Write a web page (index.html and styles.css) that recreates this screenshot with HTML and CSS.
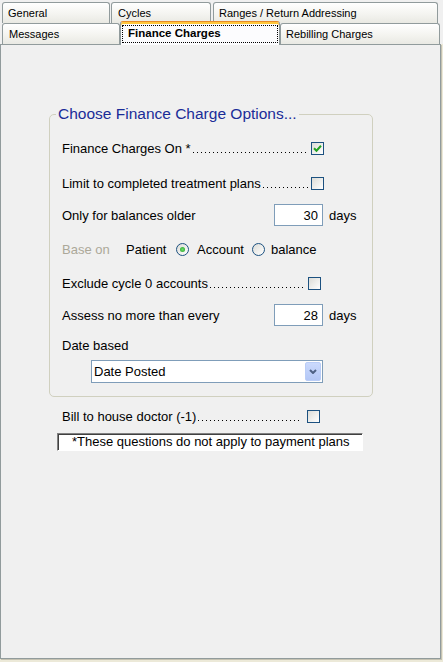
FILE: index.html
```html
<!DOCTYPE html>
<html lang="en">
<head>
  <meta charset="UTF-8">
  <title>Finance Charges</title>
  <link rel="stylesheet" href="styles.css">
</head>
<body>
  <div class="window">
    <div class="tabs">
      <div class="tab-row">
        <div class="tab tab-general">General</div>
        <div class="tab tab-cycles">Cycles</div>
        <div class="tab tab-ranges">Ranges / Return Addressing</div>
      </div>
      <div class="tab-row">
        <div class="tab tab-messages">Messages</div>
        <div class="tab active"><span class="focus">Finance Charges</span></div>
        <div class="tab tab-rebill">Rebilling Charges</div>
      </div>
    </div>

    <div class="panel">
      <fieldset class="group">
        <legend>Choose Finance Charge Options...</legend>
        <div class="rows">
          <div class="row">
            <span class="leader lead-on"><span>Finance Charges On *</span><span class="dots"></span></span>
            <span class="check gap-5">
              <svg width="9" height="9" viewBox="0 0 9 9"><polyline points="1,4.2 3.5,6.7 8,1.8" fill="none" stroke="#21a121" stroke-width="2"/></svg>
            </span>
          </div>
          <div class="row">
            <span class="leader lead-limit"><span>Limit to completed treatment plans</span><span class="dots"></span></span>
            <span class="check"></span>
          </div>
          <div class="row">
            <span class="field-label">Only for balances older</span>
            <input class="num" type="text" value="30">
            <span class="unit">days</span>
          </div>
          <div class="row">
            <span class="muted">Base on</span>
            <span class="patient">Patient</span>
            <span class="radio on"></span>
            <span class="opt">Account</span>
            <span class="radio"></span>
            <span class="opt-last">balance</span>
          </div>
          <div class="row">
            <span class="leader lead-cycle"><span>Exclude cycle 0 accounts</span><span class="dots"></span></span>
            <span class="check gap-4"></span>
          </div>
          <div class="row">
            <span class="field-label">Assess no more than every</span>
            <input class="num" type="text" value="28">
            <span class="unit">days</span>
          </div>
          <div class="row">
            <span>Date based</span>
          </div>
          <div class="row">
            <div class="select">
              <span class="select-text">Date Posted</span>
              <span class="drop">
                <svg width="8" height="5" viewBox="0 0 8 5"><polyline points="1,1 4,4 7,1" fill="none" stroke="#4d6185" stroke-width="2"/></svg>
              </span>
            </div>
          </div>
        </div>
      </fieldset>

      <div class="row bill">
        <span class="leader lead-bill"><span>Bill to house doctor (-1)</span><span class="dots"></span></span>
        <span class="check gap-8"></span>
      </div>

      <div class="note">*These questions do not apply to payment plans</div>
    </div>
  </div>
</body>
</html>
```

FILE: styles.css
```css
* {
  box-sizing: border-box;
  margin: 0;
  padding: 0;
}

body {
  font-family: "Liberation Sans", Arial, sans-serif;
  font-size: 13px;
  color: #000;
  background: #ece9d8;
}

.window {
  width: 443px;
  height: 662px;
}

/* tabs */

.tabs {
  height: 44px;
  padding-top: 2px;
  background: #f0f0f0;
}

.tab-row {
  display: flex;
  height: 21px;
}

.tab {
  flex: none;
  height: 21px;
  border: 1px solid #919b9c;
  border-bottom: none;
  border-radius: 3px 3px 0 0;
  background: linear-gradient(#ffffff, #f4f4f0 55%, #e9e9e3);
  font-size: 11px;
  line-height: 20px;
  padding-left: 5px;
  white-space: nowrap;
}

.tab-general {
  width: 108px;
  margin-left: 2px;
}

.tab-cycles {
  width: 100px;
  margin-left: 1px;
  padding-left: 6px;
}

.tab-ranges {
  width: 225px;
  margin-left: 2px;
}

.tab-messages {
  width: 118px;
  margin-left: 2px;
  padding-left: 6px;
}

.tab-rebill {
  width: 160px;
}

.tab.active {
  position: relative;
  z-index: 1;
  width: 160px;
  height: 24px;
  margin-top: -2px;
  padding: 3px 1px 0;
  background: #fcfcfe;
  border-top: 1px solid #e68b2c;
  border-radius: 3px 3px 0 0;
  box-shadow: inset 0 2px #ffc73c;
  font-size: 11.5px;
  font-weight: bold;
}

.focus {
  display: block;
  height: 18px;
  border: 1px dotted #000;
  padding-left: 5px;
  line-height: 14px;
}

/* panel */

.panel {
  width: 441px;
  height: 615px;
  border: 1px solid #919b9c;
  background: #f0f0f0;
  box-shadow: 1px 1px 0 #c5c2b2;
  padding: 60px 0 0 48px;
}

.group {
  width: 324px;
  border: 1px solid #d0d0bf;
  border-radius: 5px;
  padding: 8px 0 12px 12px;
}

.group legend {
  margin-left: -6px;
  padding: 0 2px;
  font-size: 15.5px;
  line-height: 18px;
  color: #1a2c98;
}

.rows {
  display: grid;
  grid-template-rows: 34px 36px 28px 40px 29px 34px 26px 26px;
}

.row {
  display: flex;
  align-items: center;
  white-space: nowrap;
}

/* label followed by a dotted leader up to the checkbox */
.leader {
  flex: none;
  display: flex;
  line-height: 15px;
}

.dots {
  flex: 1;
  align-self: flex-end;
  height: 1px;
  margin: 0 0 3px 2px;
  background: linear-gradient(to right, #000 1px, transparent 1px) repeat-x;
  background-size: 4px 1px;
}

.lead-on { width: 244px; }
.lead-limit { width: 249px; }
.lead-cycle { width: 242px; }
.lead-bill { width: 237px; }

.gap-4 { margin-left: 4px; }
.gap-5 { margin-left: 5px; }
.gap-8 { margin-left: 8px; }

.check {
  flex: none;
  width: 13px;
  height: 13px;
  border: 1px solid #1c5180;
  background: linear-gradient(135deg, #dcdcd7, #ffffff);
  display: flex;
  align-items: center;
  justify-content: center;
}

.field-label {
  flex: none;
  width: 212px;
}

.num {
  flex: none;
  width: 49px;
  height: 22px;
  border: 1px solid #7f9db9;
  background: #fff;
  font: inherit;
  text-align: right;
  padding-right: 4px;
  outline: none;
}

.unit {
  margin-left: 6px;
}

.muted {
  flex: none;
  width: 64px;
  color: #aca899;
}

.patient {
  flex: none;
  width: 50px;
}

.radio {
  flex: none;
  width: 13px;
  height: 13px;
  border-radius: 50%;
  border: 1px solid #1c5180;
  background: linear-gradient(135deg, #dcdcd7, #ffffff);
  display: flex;
  align-items: center;
  justify-content: center;
}

.radio.on::after {
  content: "";
  width: 5px;
  height: 5px;
  border-radius: 50%;
  background: radial-gradient(#6fdc6f, #21a121);
}

.opt {
  flex: none;
  width: 55px;
  margin-left: 8px;
}

.opt-last {
  margin-left: 6px;
}

.select {
  width: 232px;
  height: 23px;
  margin-left: 29px;
  border: 1px solid #7f9db9;
  background: #fff;
  padding: 1px;
  display: flex;
  align-items: center;
  justify-content: space-between;
}

.select-text {
  padding-left: 1px;
}

.drop {
  width: 16px;
  height: 19px;
  border: 1px solid #bacdf7;
  border-radius: 2px;
  background: linear-gradient(#cbdafd, #b3c7f6);
  display: flex;
  align-items: center;
  justify-content: center;
}

.bill {
  height: 24px;
  margin: 7px 0 0 13px;
}

.note {
  width: 306px;
  height: 18px;
  margin: 5px 0 0 8px;
  padding-left: 14px;
  line-height: 16px;
  background: #fff;
  border-top: 1px solid #808080;
  border-left: 1px solid #808080;
  border-right: 1px solid #fff;
  border-bottom: 1px solid #fff;
  box-shadow: inset 1px 1px #404040;
  white-space: nowrap;
}
```
